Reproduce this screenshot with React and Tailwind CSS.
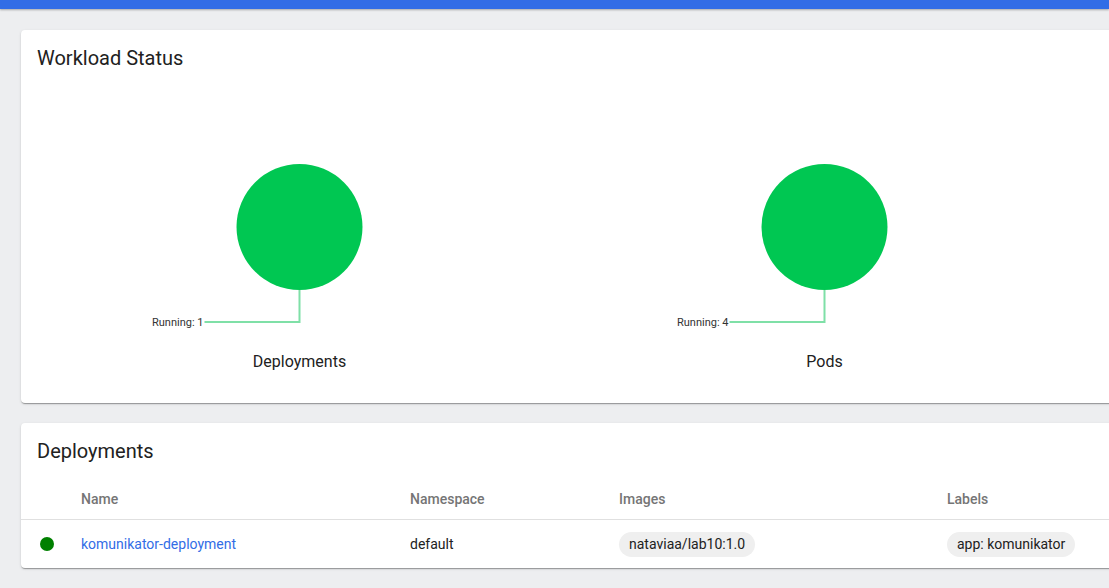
const cardShadow =
  'shadow-[0_2px_1px_-1px_rgba(0,0,0,0.2),0_1px_1px_0_rgba(0,0,0,0.14),0_1px_3px_0_rgba(0,0,0,0.12)]'

const Pie = ({ label, count }) => {
  const cx = 262.5
  return (
    <div className="w-[525px] shrink-0 flex flex-col items-center">
      <svg width="525" height="210" className="block">
        <circle cx={cx} cy="97" r="63" fill="#00c752" />
        <polyline
          points={`${cx},160 ${cx},192 ${cx - 95},192`}
          fill="none"
          stroke="#7fe0a7"
          strokeWidth="2"
        />
        <text
          x={cx - 96}
          y="193"
          textAnchor="end"
          dominantBaseline="middle"
          fontSize="11"
          fill="#333"
          fontFamily="Roboto, sans-serif"
        >
          Running: {count}
        </text>
      </svg>
      <div className="mt-[10px] h-6 leading-6 text-[16px] text-[#212121]">{label}</div>
    </div>
  )
}

const App = () => {
  return (
    <div className="w-[1109px] h-[588px] overflow-hidden bg-[#edeef0] font-['Roboto',sans-serif]">
      <div className="h-[9px] bg-[#326de6] shadow-[0_1px_2px_rgba(0,0,0,0.3)]" />
      <div className="pl-[21px] pt-[21px]">
        <div className={`w-[1700px] h-[373px] bg-white rounded ${cardShadow} pt-3 px-4`}>
          <h2 className="h-8 leading-8 text-[20px] text-[#212121]">Workload Status</h2>
          <div className="flex mt-[56px]">
            <Pie label="Deployments" count={1} />
            <Pie label="Pods" count={4} />
          </div>
        </div>

        <div className={`mt-5 w-[1700px] h-[145px] bg-white rounded ${cardShadow} pt-3`}>
          <h2 className="px-4 h-8 leading-8 text-[20px] text-[#212121]">Deployments</h2>
          <div className="mt-[13px] flex items-center h-10 border-b border-[#e0e0e0] text-[14px] font-medium text-[#757575]">
            <div className="w-[60px] shrink-0" />
            <div className="w-[329px] shrink-0">Name</div>
            <div className="w-[209px] shrink-0">Namespace</div>
            <div className="w-[328px] shrink-0">Images</div>
            <div>Labels</div>
          </div>
          <div className="flex items-center h-12 text-[14px] text-[#212121]">
            <div className="w-[60px] shrink-0 pl-[19px]">
              <div className="w-[14px] h-[14px] rounded-full bg-[#008000]" />
            </div>
            <div className="w-[329px] shrink-0 text-[#326de6]">komunikator-deployment</div>
            <div className="w-[209px] shrink-0">default</div>
            <div className="w-[328px] shrink-0">
              <span className="inline-flex items-center h-[25px] px-[10px] rounded-full bg-[#efefef]">
                nataviaa/lab10:1.0
              </span>
            </div>
            <div>
              <span className="inline-flex items-center h-[25px] px-[10px] rounded-full bg-[#efefef]">
                app: komunikator
              </span>
            </div>
          </div>
        </div>
      </div>
    </div>
  )
}

export default App
